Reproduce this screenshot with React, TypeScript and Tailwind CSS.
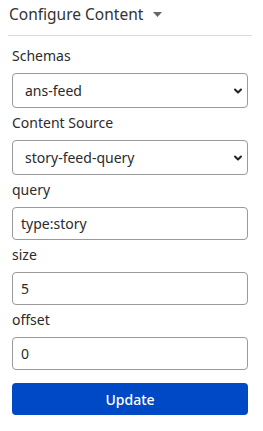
import { ChevronDown } from 'lucide-react';

const font = { fontFamily: '"Noto Sans", "Open Sans", sans-serif' };

function SelectField({ label, value }: { label: string; value: string }) {
  return (
    <div className="flex flex-col">
      <label className="text-[14px] leading-5 text-[#2b2b2b] mb-[7px]">{label}</label>
      <div className="relative">
        <select
          defaultValue={value}
          className="appearance-none w-full h-[35px] rounded-[4px] border border-[#9a9a9a] bg-white pl-3 pr-8 text-[14px] text-[#2b2b2b] outline-none"
        >
          <option value={value}>{value}</option>
        </select>
        <ChevronDown
          className="absolute right-[4px] top-1/2 -translate-y-1/2 w-[12px] h-[12px] text-[#222] pointer-events-none"
          strokeWidth={4}
        />
      </div>
    </div>
  );
}

function TextField({ label, value }: { label: string; value: string }) {
  return (
    <div className="flex flex-col">
      <label className="text-[14px] leading-5 text-[#2b2b2b] mb-[7px]">{label}</label>
      <input
        type="text"
        defaultValue={value}
        className="w-full h-[33px] rounded-[4px] border border-[#9a9a9a] bg-white px-2 text-[14px] text-[#2b2b2b] outline-none"
      />
    </div>
  );
}

export default function App() {
  return (
    <div className="w-[263px] h-[431px] bg-white pl-2 pr-[11px] pt-[2px]" style={font}>
      <div className="flex items-center gap-[10px] h-[24px] pl-[1px]">
        <h2 className="text-[15.5px] leading-6 text-[#333]">Configure Content</h2>
        <svg width="9" height="5" viewBox="0 0 9 5" className="mt-[1px]">
          <path d="M0 0 L9 0 L4.5 5 Z" fill="#666" />
        </svg>
      </div>
      <div className="h-px bg-[#dcdcdc] mt-[9px]" />
      <form className="px-1 pt-[10px] flex flex-col gap-[5px]" onSubmit={(e) => e.preventDefault()}>
        <SelectField label="Schemas" value="ans-feed" />
        <SelectField label="Content Source" value="story-feed-query" />
        <TextField label="query" value="type:story" />
        <TextField label="size" value="5" />
        <TextField label="offset" value="0" />
        <button
          type="submit"
          className="mt-[8px] h-[32px] w-full rounded-[4px] bg-[#0049c6] text-white text-[14px] font-medium"
        >
          Update
        </button>
      </form>
    </div>
  );
}
